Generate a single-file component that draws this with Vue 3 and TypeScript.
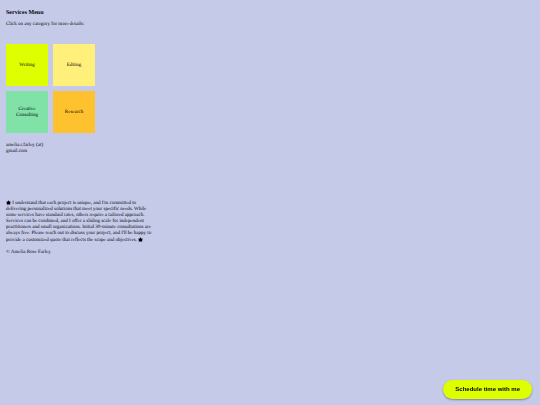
<script setup lang="ts">
interface Category {
  label: string
  tone: string
}

const categories: Category[] = [
  { label: 'Writing', tone: 'lime' },
  { label: 'Editing', tone: 'yellow' },
  { label: 'Creative Consulting', tone: 'mint' },
  { label: 'Research', tone: 'orange' },
]
</script>

<template>
  <main class="page">
    <h1 class="title">Services Menu</h1>
    <p class="intro">Click on any category for more details:</p>
    <nav class="grid" aria-label="Services">
      <a v-for="c in categories" :key="c.label" href="#" class="tile" :class="c.tone">{{ c.label }}</a>
    </nav>
    <address class="contact">amelia.r.farley (at)<br />gmail.com</address>
    <p class="note">
      <svg class="star" viewBox="0 0 10 10" aria-hidden="true"><path d="M5 0.5 6.5 3 9.5 3.7 8.3 6 8.6 9.2 5 8.8 1.4 9.2 1.7 6 0.5 3.7 3.5 3Z" /></svg>
      I understand that each project is unique, and I'm committed to<br />
      delivering personalized solutions that meet your specific needs. While<br />
      some services have standard rates, others require a tailored approach.<br />
      Services can be combined, and I offer a sliding scale for independent<br />
      practitioners and small organizations. Initial 30-minute consultations are<br />
      always free. Please reach out to discuss your project, and I'll be happy to<br />
      provide a customized quote that reflects the scope and objectives.
      <svg class="star" viewBox="0 0 10 10" aria-hidden="true"><path d="M5 0.5 6.5 3 9.5 3.7 8.3 6 8.6 9.2 5 8.8 1.4 9.2 1.7 6 0.5 3.7 3.5 3Z" /></svg>
    </p>
    <footer class="copyright">© Amelia Rose Farley</footer>
    <button type="button" class="schedule">Schedule time with me</button>
  </main>
</template>

<style>
body {
  margin: 0;
  background: #c6cae9;
}
</style>

<style scoped>
.page {
  box-sizing: border-box;
  min-height: 100vh;
  padding: 10px 6px;
  font-family: "Liberation Serif", "Times New Roman", serif;
  font-size: 5px;
  line-height: 6px;
  color: #000;
  text-rendering: geometricPrecision;
}
.title,
.intro,
.note {
  margin: 0;
  font-size: inherit;
}
.title {
  font-size: 6px;
}
.intro {
  margin-top: 6px;
}
.grid {
  display: grid;
  grid-template-columns: 42px 42px;
  grid-auto-rows: 42px;
  gap: 5px;
  margin-top: 16px;
}
.tile {
  box-sizing: border-box;
  display: flex;
  align-items: center;
  justify-content: center;
  padding: 1px 8px 0;
  color: inherit;
  text-align: center;
  text-decoration: none;
}
.lime { background: #deff00; }
.yellow { background: #fff07c; }
.mint { background: #80e2a7; }
.orange { background: #fec22f; }
.contact {
  margin-top: 10px;
  font-style: normal;
}
.note {
  margin-top: 45px;
  white-space: nowrap;
}
.star {
  width: 5px;
  height: 5px;
  vertical-align: -1px;
}
.copyright {
  margin-top: 6px;
}
.schedule {
  position: fixed;
  right: 8px;
  bottom: 6px;
  padding: 6px 12px;
  border: 0;
  border-radius: 10px;
  background: #deff00;
  box-shadow: 0 1px 2px rgb(0 0 0 / 35%);
  color: #000;
  font: bold 6px/7px "Liberation Sans", Arial, sans-serif;
  cursor: pointer;
}
</style>
